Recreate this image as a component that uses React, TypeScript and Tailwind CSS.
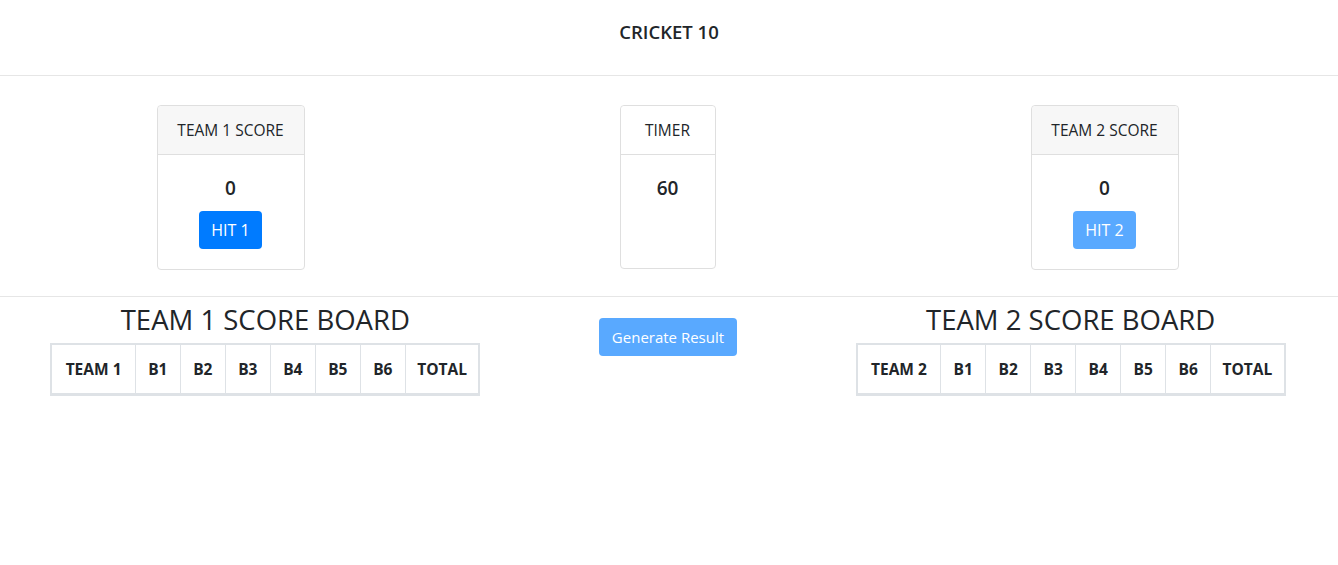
const cols = ['B1', 'B2', 'B3', 'B4', 'B5', 'B6'];

const ScoreCard = ({ title, score, label, faded }: { title: string; score: number; label: string; faded?: boolean }) => (
  <div className="w-[148px] border border-[#dfdfdf] rounded-[4px] flex flex-col">
    <div className="h-[49px] pt-[2px] bg-[#f7f7f7] border-b border-[#dfdfdf] rounded-t-[4px] flex items-center justify-center text-[15.5px] text-[#212529]">
      {title}
    </div>
    <div className="flex-1 flex flex-col items-center pt-[21px] pb-[20px]">
      <div className="h-[24px] leading-[24px] text-[19px] font-semibold text-[#212529]">{score}</div>
      <button
        className={`mt-[11px] h-[38px] px-[12px] rounded-[4px] text-white text-[16px] ${
          faded ? 'bg-[#59a9ff]' : 'bg-[#007bff]'
        }`}
      >
        {label}
      </button>
    </div>
  </div>
);

const ScoreBoard = ({ team }: { team: string }) => (
  <div className="flex flex-col items-center">
    <h3 className="h-[46px] flex items-center text-[27.5px] font-medium text-[#212529]">{team} SCORE BOARD</h3>
    <table className="w-[428px] min-w-[428px] table-fixed border-collapse border-2 border-b-[3px] border-[#dee2e6] text-[15.5px] font-bold text-[#212529]">
      <thead>
        <tr className="h-[50px]">
          <th className="w-[84px] border border-[#dee2e6] px-0 pt-[2px]">{team}</th>
          {cols.map((c) => (
            <th key={c} className="w-[45px] border border-[#dee2e6] px-0 pt-[2px]">
              {c}
            </th>
          ))}
          <th className="w-[74px] border border-[#dee2e6] px-0 pt-[2px]">TOTAL</th>
        </tr>
      </thead>
    </table>
  </div>
);

export default function App() {
  return (
    <div className="min-h-[565px] bg-white font-['Open_Sans',sans-serif] text-[#212529]">
      <div className="h-[75px] flex items-center justify-center pb-[11px]">
        <h5 className="text-[18.5px] font-semibold">CRICKET 10</h5>
      </div>
      <hr className="border-t border-[#e6e6e6]" />

      <div className="grid grid-cols-3 pl-[12px] pr-[15px] pt-[29px] pb-[26px]">
        <div className="flex justify-center">
          <ScoreCard title="TEAM 1 SCORE" score={0} label="HIT 1" />
        </div>
        <div className="flex justify-center">
          <div className="w-[96px] h-[164px] border border-[#dfdfdf] rounded-[4px] flex flex-col">
            <div className="h-[49px] pt-[2px] bg-white border-b border-[#dfdfdf] rounded-t-[4px] flex items-center justify-center text-[15.5px]">
              TIMER
            </div>
            <div className="pt-[21px] flex justify-center">
              <div className="h-[24px] leading-[24px] text-[19px] font-semibold">60</div>
            </div>
          </div>
        </div>
        <div className="flex justify-center">
          <ScoreCard title="TEAM 2 SCORE" score={0} label="HIT 2" faded />
        </div>
      </div>

      <hr className="border-t border-[#e6e6e6]" />

      <div className="grid grid-cols-3 pl-[64px] pr-[66px]">
        <ScoreBoard team="TEAM 1" />
        <div className="flex justify-center pt-[21px]">
          <button className="h-[38px] w-[138px] rounded-[4px] bg-[#59a9ff] text-white text-[15px]">
            Generate Result
          </button>
        </div>
        <ScoreBoard team="TEAM 2" />
      </div>
    </div>
  );
}
